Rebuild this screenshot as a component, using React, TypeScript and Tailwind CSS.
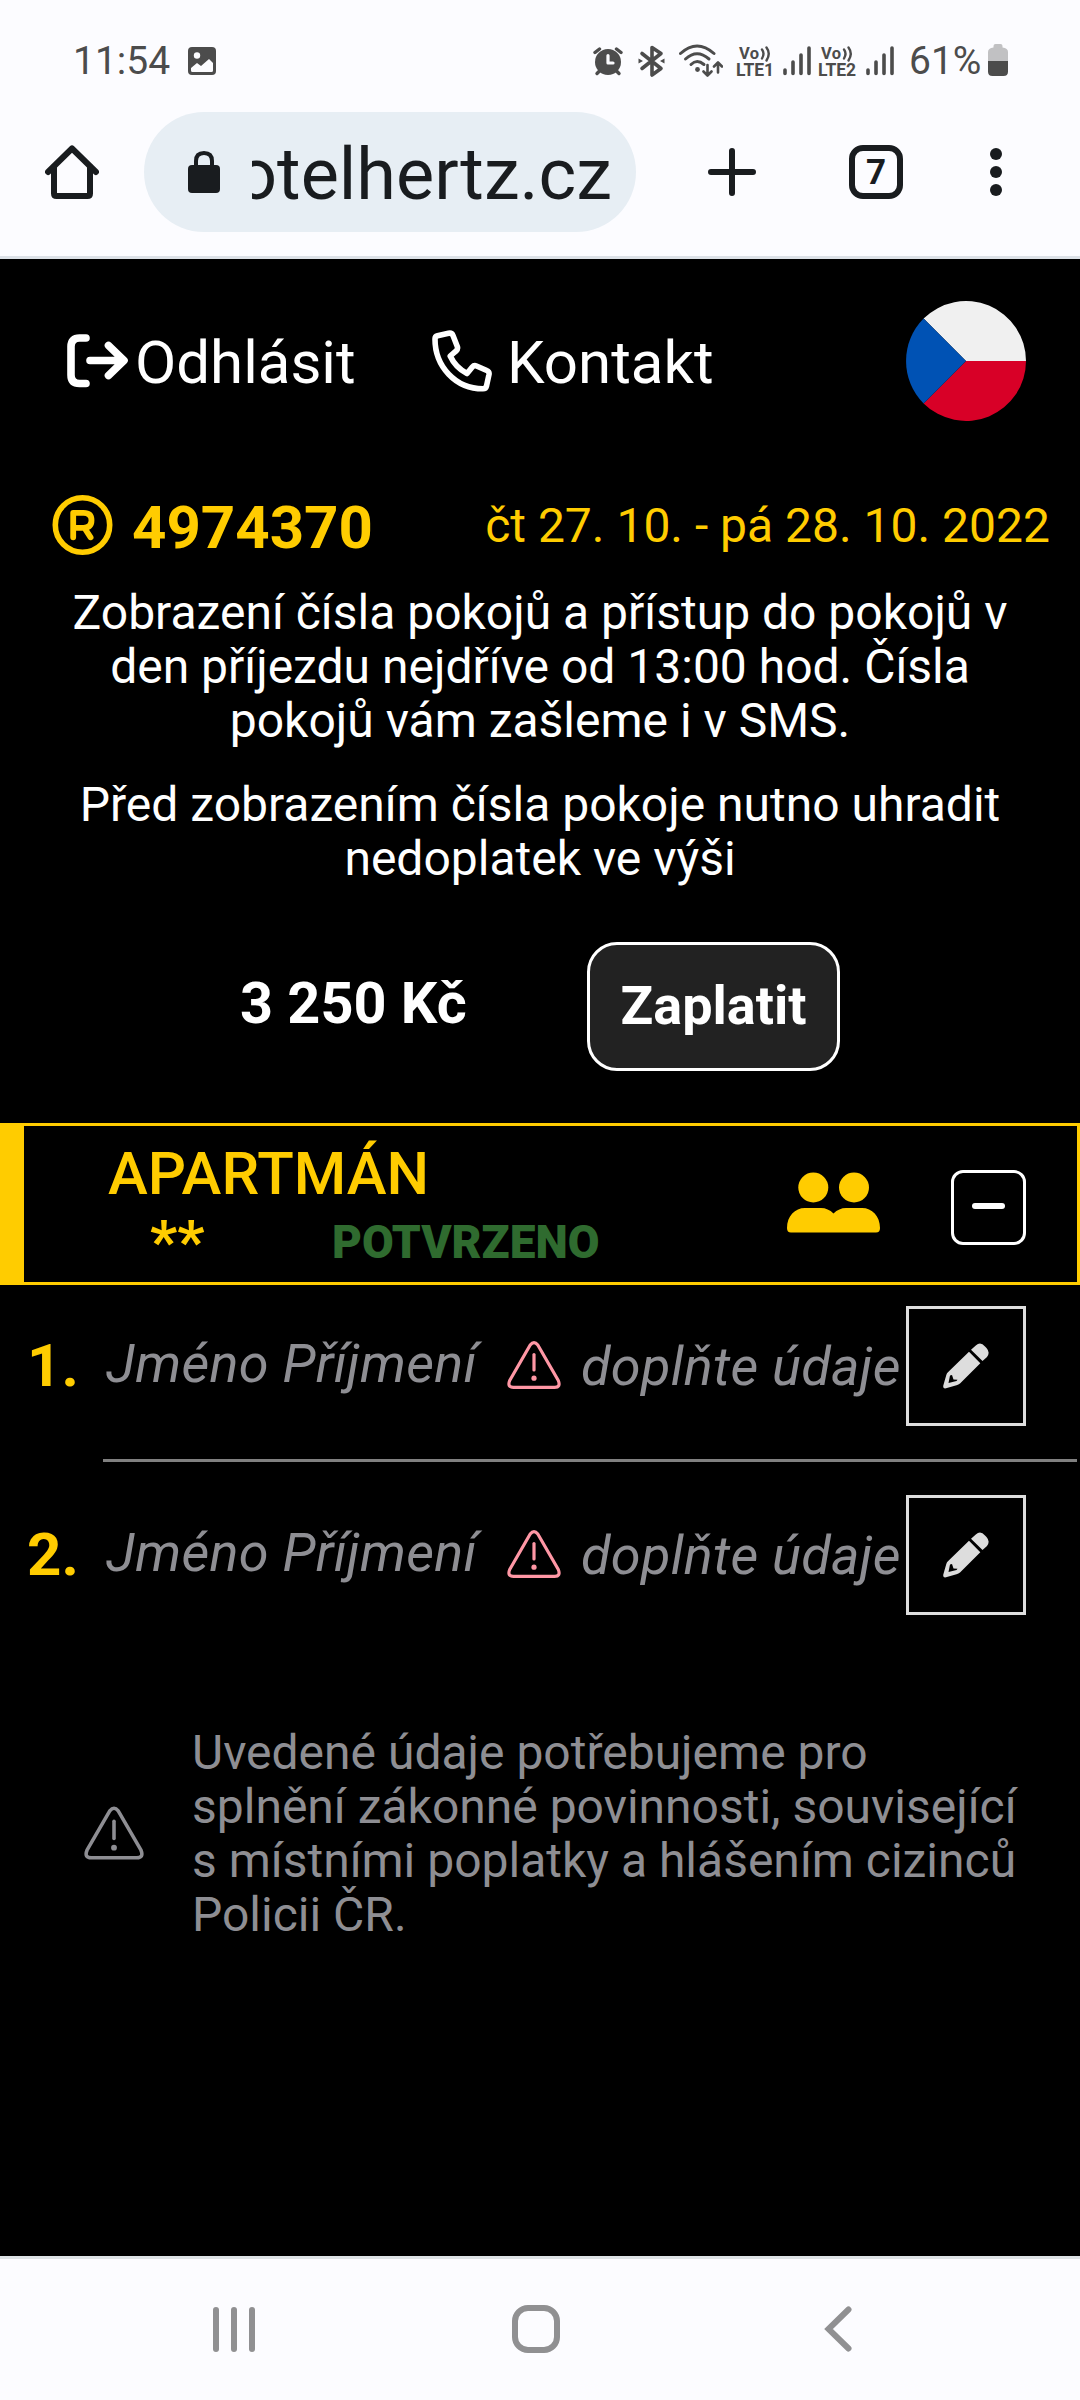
import type { ReactNode } from "react";

interface Guest {
  order: number;
  name: string;
}

const guests: Guest[] = [
  { order: 1, name: "Jméno Příjmení" },
  { order: 2, name: "Jméno Příjmení" },
];

interface IconProps {
  className?: string;
}

/* ---------- status bar icons ---------- */

function StatusIcon({ width, className, children }: { width: number; className?: string; children: ReactNode }) {
  return (
    <svg
      width={width}
      height={44}
      viewBox={`0 0 ${width} 44`}
      fill="none"
      stroke="#4c4c4c"
      strokeLinecap="round"
      strokeLinejoin="round"
      className={`shrink-0 ${className ?? ""}`}
    >
      {children}
    </svg>
  );
}

function AlarmIcon() {
  return (
    <StatusIcon width={30}>
      <circle cx="15" cy="24" r="13" fill="#4c4c4c" stroke="none" />
      <path d="M2 14.5 6.5 11M28 14.5 23.5 11" strokeWidth="3.4" />
      <path d="M6 33.5 4 35.5M24 33.5 26 35.5" strokeWidth="3.4" />
      <path d="M15 17.5V25H20" stroke="#fcfcff" strokeWidth="3.2" />
    </StatusIcon>
  );
}

function BluetoothIcon() {
  return (
    <StatusIcon width={27} className="ml-[15px]">
      <path d="M4 15.5 23 30.5 14 37V9.5L23 15.5 4 30.5" strokeWidth="3.6" />
      <path d="M0.5 20.5 5 23 0.5 25.5ZM26.5 20.5 22 23 26.5 25.5Z" fill="#4c4c4c" stroke="none" />
    </StatusIcon>
  );
}

function WifiIcon() {
  return (
    <StatusIcon width={44} className="ml-[14px]">
      <path d="M1.5 15.5Q18 0.5 35 15.5" strokeWidth="3" />
      <path d="M6.5 21Q18 10.5 30 21" strokeWidth="3" />
      <path d="M12 26.5Q18 20.5 25 26.5" strokeWidth="3" />
      <circle cx="18.5" cy="31.5" r="2.4" fill="#4c4c4c" stroke="none" />
      <path d="M28.5 27V37M24.5 33.5 28.5 37.5 32.5 33.5M39 34.5V25M35 28.5 39 24.5 43 28.5" strokeWidth="2.6" />
    </StatusIcon>
  );
}

function VolteIcon({ sim }: { sim: number }) {
  return (
    <StatusIcon width={40}>
      <g fill="#4c4c4c" stroke="none" fontFamily="Roboto, sans-serif" fontWeight="700">
        <text x="3" y="20.5" fontSize="16.5" textLength="20">Vo</text>
        <text x="0" y="38" fontSize="17.5" textLength="38">LTE{sim}</text>
      </g>
      <path d="M26 11.5Q29 15.5 26 20.5M30.5 9.5Q35 15.5 30.5 22.5" strokeWidth="2.4" />
    </StatusIcon>
  );
}

function SignalIcon({ className }: IconProps) {
  return (
    <StatusIcon width={28} className={className}>
      <path d="M2 32V35.5M10 24V35.5M18 17V35.5M26 10V35.5" strokeWidth="3.6" />
    </StatusIcon>
  );
}

function BatteryIcon() {
  return (
    <StatusIcon width={20} className="ml-[5px]">
      <path d="M5.5 8Q5.5 6 7.5 6H12.5Q14.5 6 14.5 8V9.5Q20 10 20 14V23H0V14Q0 10 5.5 9.5Z" fill="#c1c1c3" stroke="none" />
      <path d="M0 23H20V33.5Q20 38 15.5 38H4.5Q0 38 0 33.5Z" fill="#4c4c4c" stroke="none" />
    </StatusIcon>
  );
}

/* ---------- page icons ---------- */

function LogoutIcon() {
  return (
    <svg width="62" height="54" viewBox="0 0 62 54" fill="none" stroke="white" strokeWidth="7.6" strokeLinecap="round" strokeLinejoin="round">
      <path d="M19 4H12.5Q4 4 4 12.5V41Q4 49.5 12.5 49.5H19" />
      <path d="M23 26.5H56M41.5 11.5 57 26.5 41.5 41.5" />
    </svg>
  );
}

function PhoneIcon() {
  return (
    <svg width="60" height="62" viewBox="0 0 60 62" fill="none" stroke="white" strokeWidth="5.6" strokeLinejoin="round">
      <path d="M5.5 5.8 16.5 3.2Q19.8 2.5 21 5.5L25.3 16.5Q26.2 19 24.2 20.8L18.2 26Q23.5 37.5 35 43.5L40.3 37Q42 35 44.5 36L54.8 40.5Q57.5 41.6 57 44.5L54.5 56Q53.8 58.8 51 58.8C23.5 58.8 3 36.5 3 9Q3 6.5 5.5 5.8Z" />
    </svg>
  );
}

function RegisteredIcon() {
  return (
    <svg width="61" height="60" viewBox="0 0 61 60" fill="none" stroke="#ffcc00" strokeLinecap="round" strokeLinejoin="round">
      <circle cx="30.5" cy="30" r="27.2" strokeWidth="5.6" />
      <path d="M21.2 42.3V17.8H31.5Q39.5 17.8 39.5 25.3T31.5 32.8H21.2M32.5 33 38.6 42.3" strokeWidth="5.8" />
    </svg>
  );
}

function CzechFlag() {
  return (
    <svg width="120" height="120" viewBox="0 0 120 120">
      <path d="M17.6 17.6A60 60 0 0 1 120 60H60Z" fill="#f0f0f0" />
      <path d="M120 60A60 60 0 0 1 17.6 102.4L60 60Z" fill="#d80027" />
      <path d="M17.6 17.6A60 60 0 0 0 17.6 102.4L60 60Z" fill="#0052b4" />
    </svg>
  );
}

function PeopleIcon() {
  return (
    <svg width="93" height="62" viewBox="0 0 93 62" fill="#ffcc00">
      <circle cx="26.3" cy="15.5" r="15" />
      <circle cx="67" cy="15.5" r="15" />
      <path d="M0 56C0 44 8 36 18 36H34Q41 36 46.5 41.5Q52 36 59 36H75C85 36 93 44 93 56Q93 60.5 89 60.5H4Q0 60.5 0 56Z" />
    </svg>
  );
}

function WarningIcon({ className }: IconProps) {
  return (
    <svg viewBox="0 0 54 48" fill="none" stroke="currentColor" strokeWidth="3.2" strokeLinecap="round" strokeLinejoin="round" className={className}>
      <path d="M23.2 4Q27 -0.6 30.8 4L51.3 39.5Q54 46.3 47.5 46.3H6.5Q0 46.3 2.7 39.5Z" />
      <path d="M27 13.5V29" />
      <circle cx="27" cy="37.2" r="2.6" fill="currentColor" stroke="none" />
    </svg>
  );
}

function PencilIcon() {
  return (
    <svg width="46" height="46" viewBox="0 0 46 46" fill="#dddddd">
      <path d="M32.8 2.5Q37.5 -1.8 42 3.5L43.5 5Q47.5 9.5 44 14L39.5 18 28 6.8Z" />
      <path fillRule="evenodd" d="M26 8.8 37.3 20.2 17 40.5Q15.5 41.8 13.5 42.3L3 45.3Q-0.3 46 0.3 42.5L3.3 32Q3.8 30 5.2 29ZM7 32.5 5.5 40 13.5 38 14.5 36.8 10.5 36.5 9 32Z" />
    </svg>
  );
}

/* ---------- screen sections ---------- */

function StatusBar() {
  return (
    <div className="flex h-[82px] items-center pt-[38px] pl-[73px] pr-[72px] text-[39px] leading-[44px] text-[#4c4c4c]">
      <span className="w-[115px] pt-px">11:54</span>
      <svg width="28" height="28" viewBox="0 0 28 28" className="mt-[2px]">
        <rect width="28" height="28" rx="4" fill="#4c4c4c" />
        <circle cx="9" cy="8.5" r="3.2" fill="#fcfcff" />
        <path d="M3 21 9 16 13 19 21 12 25 16V23.5Q25 25 23.5 25H4.5Q3 25 3 23.5Z" fill="#fcfcff" />
      </svg>
      <div className="ml-auto flex items-center">
        <AlarmIcon />
        <BluetoothIcon />
        <WifiIcon />
        <div className="ml-[13px] flex">
          <VolteIcon sim={1} />
          <SignalIcon className="ml-[7px]" />
        </div>
        <div className="ml-[7px] flex">
          <VolteIcon sim={2} />
          <SignalIcon className="ml-[8px]" />
        </div>
        <span className="ml-[15px] w-[74px] whitespace-nowrap pt-px">61%</span>
        <BatteryIcon />
      </div>
    </div>
  );
}

function BrowserBar() {
  return (
    <div className="flex h-[177px] items-center border-b-[3px] border-[#dce1e7] pt-[6px] pl-[45px]">
      <svg width="54" height="54" viewBox="0 0 54 54" fill="none" stroke="#191c1f" strokeWidth="6" strokeLinecap="round" strokeLinejoin="round">
        <path d="M3 27 27 3.5 51 27" />
        <path d="M9 22V48.5Q9 51 11.5 51H42.5Q45 51 45 48.5V22" />
      </svg>
      <div className="ml-[45px] flex h-[120px] w-[492px] items-center rounded-full bg-[#e7eef4] pl-[44px]">
        <svg width="32" height="42" viewBox="0 0 32 42">
          <rect y="14" width="32" height="28" rx="4" fill="#191c1f" />
          <path d="M8 16V10Q8 2 16 2T24 10V16" fill="none" stroke="#191c1f" strokeWidth="4" />
        </svg>
        {/* The address is scrolled to its end, so only the tail of the host is visible */}
        <div className="ml-[32px] flex w-[360px] justify-end overflow-hidden pt-[6px] text-[72px] leading-[96px] text-[#191c1f]">
          <span>otelhertz.cz</span>
        </div>
      </div>
      <svg width="48" height="48" viewBox="0 0 48 48" stroke="#191c1f" strokeWidth="6" strokeLinecap="round" className="ml-[72px]">
        <path d="M24 3V45M3 24H45" />
      </svg>
      <div className="ml-[93px] flex h-[54px] w-[54px] items-center justify-center rounded-[14px] border-[6px] border-[#191c1f] text-[35px] font-bold leading-none text-[#191c1f]">
        7
      </div>
      <div className="ml-[87px] flex flex-col gap-[6px]">
        <span className="h-3 w-3 rounded-full bg-[#191c1f]" />
        <span className="h-3 w-3 rounded-full bg-[#191c1f]" />
        <span className="h-3 w-3 rounded-full bg-[#191c1f]" />
      </div>
    </div>
  );
}

function MenuBar() {
  return (
    <header className="flex h-[204px] items-center pl-[67px] pr-[54px] text-[60px] leading-[72px] text-white">
      <LogoutIcon />
      <span className="ml-[6px] w-[297px] pt-[3px]">Odhlásit</span>
      <PhoneIcon />
      <span className="ml-[15px] pt-[3px]">Kontakt</span>
      <div className="ml-auto">
        <CzechFlag />
      </div>
    </header>
  );
}

function GuestRow({ guest }: { guest: Guest }) {
  return (
    <div className="flex h-[120px] items-center pl-[27px]">
      <span className="w-[79px] text-[60px] font-bold leading-[72px] text-[#ffcc00]">{guest.order}.</span>
      <span className="w-[401px] whitespace-nowrap pb-[4px] text-[54px] italic leading-[64px] tracking-[0.3px] text-[#8e8e93]">{guest.name}</span>
      <WarningIcon className="mb-[3px] h-[48px] w-[54px] text-[#ff97a5]" />
      <span className="ml-[20px] w-[325px] whitespace-nowrap pt-[2px] text-[54px] italic leading-[64px] tracking-[0.3px] text-[#8e8e93]">doplňte údaje</span>
      <button className="flex h-[120px] w-[120px] items-center justify-center border-[3px] border-[#dedede]">
        <PencilIcon />
      </button>
    </div>
  );
}

function NavigationBar() {
  return (
    <nav className="flex h-[144px] items-center border-t-[3px] border-[#dde2e5] bg-[#fcfcff] pb-[1px]">
      <div className="ml-[213px] flex gap-[12px]">
        <span className="h-[45px] w-[6px] rounded-full bg-[#909092]" />
        <span className="h-[45px] w-[6px] rounded-full bg-[#909092]" />
        <span className="h-[45px] w-[6px] rounded-full bg-[#909092]" />
      </div>
      <div className="ml-[257px] h-[48px] w-[48px] rounded-[16px] border-[6px] border-[#909092]" />
      <svg width="28" height="46" viewBox="0 0 28 46" fill="none" stroke="#909092" strokeWidth="6" strokeLinecap="round" className="ml-[264px]">
        <path d="M24.5 3.5 4.5 23 24.5 42.5" />
      </svg>
    </nav>
  );
}

export default function App() {
  return (
    <div className="flex h-[2400px] w-[1080px] flex-col overflow-hidden bg-[#fcfcff] font-['Roboto',sans-serif]">
      <StatusBar />
      <BrowserBar />

      <main className="flex-1 bg-black">
        <MenuBar />

        {/* Reservation number and dates */}
        <div className="flex h-[123px] items-center pl-[52px] pr-[30px] text-[#ffcc00]">
          <RegisteredIcon />
          <span className="ml-[19px] pt-[6px] text-[60px] font-bold leading-[72px]">4974370</span>
          <span className="ml-auto whitespace-nowrap pt-[2px] text-[48px] leading-[56px]">čt 27. 10. - pá 28. 10. 2022</span>
        </div>

        <div className="space-y-[30px] text-center text-[48px] leading-[54px] text-white">
          <p>
            Zobrazení čísla pokojů a přístup do pokojů v<br />
            den příjezdu nejdříve od 13:00 hod. Čísla<br />
            pokojů vám zašleme i v SMS.
          </p>
          <p>
            Před zobrazením čísla pokoje nutno uhradit<br />
            nedoplatek ve výši
          </p>
        </div>

        {/* Outstanding payment */}
        <div className="mt-[56px] flex items-center pl-[240px] font-bold text-white">
          <span className="w-[347px] pb-[6px] text-[57.6px] leading-[68px]">3 250 Kč</span>
          <button className="flex h-[129px] w-[253px] items-center justify-center rounded-[30px] border-[3px] border-white bg-[#222222] pb-[2px] text-[54px] leading-[64px]">
            Zaplatit
          </button>
        </div>

        {/* Room header */}
        <section className="mt-[52px] flex h-[162px] items-center border-[3px] border-l-[24px] border-[#ffcc00] pr-[51px]">
          <div className="ml-[84px] w-[679px] pt-[6px] text-[#ffcc00]">
            <div className="text-[60px] font-medium leading-[66px]">APARTMÁN</div>
            <div className="flex h-[66px] items-center">
              <span className="ml-[42px] w-[182px] pt-[4px] text-[60px] font-bold leading-[66px]">**</span>
              <span className="pt-[3px] text-[46px] font-black leading-[54px] text-[#2f6b2f]">POTVRZENO</span>
            </div>
          </div>
          <div className="pb-[2px]">
            <PeopleIcon />
          </div>
          <button className="ml-auto mt-[7px] flex h-[75px] w-[75px] justify-center rounded-[12px] border-[3px] border-white pt-[30px]">
            <span className="h-[6px] w-[33px] rounded-full bg-white" />
          </button>
        </section>

        <div className="pt-[21px]">
          <GuestRow guest={guests[0]} />
          <div className="ml-[103px] mr-[3px] mt-[33px] mb-[33px] h-[3px] bg-[#808080]" />
          <GuestRow guest={guests[1]} />
        </div>

        <div className="mt-[111px] flex items-center pl-[84px] text-[#8e8e93]">
          <WarningIcon className="mb-[3px] h-[54px] w-[60px]" />
          <p className="ml-[48px] text-[48px] leading-[54px]">
            Uvedené údaje potřebujeme pro<br />
            splnění zákonné povinnosti, související<br />
            s místními poplatky a hlášením cizinců<br />
            Policii ČR.
          </p>
        </div>
      </main>

      <NavigationBar />
    </div>
  );
}
